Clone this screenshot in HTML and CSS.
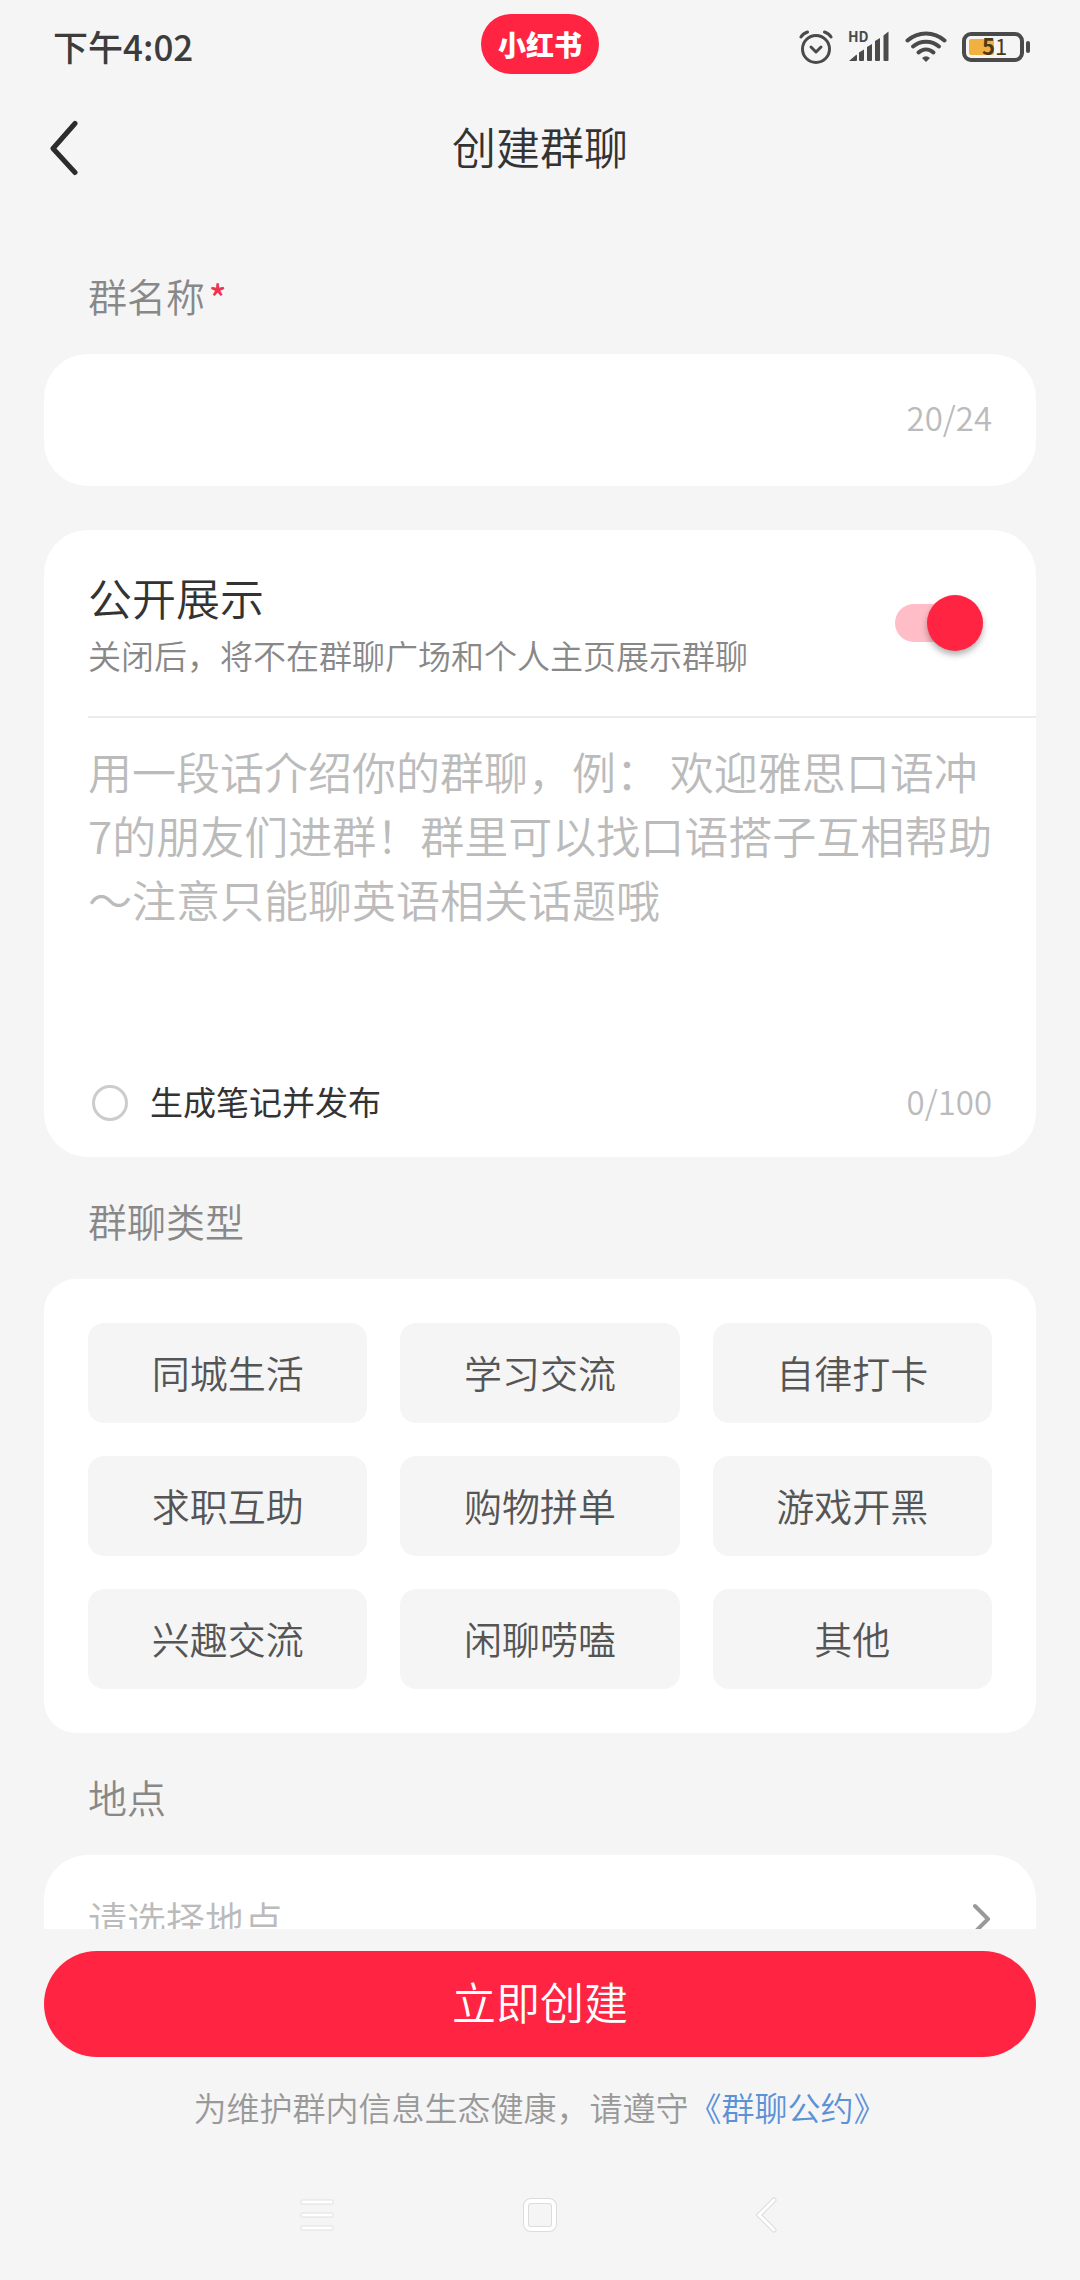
FILE: index.html
```html
<!DOCTYPE html>
<html lang="zh-CN">
<head>
    <meta charset="utf-8">
    <meta name="viewport" content="width=device-width, initial-scale=1">
    <title>创建群聊</title>
    <link rel="stylesheet" href="styles.css">
</head>
<body>
    <div class="status-bar">
        <span class="time">下午4:02</span>
        <span class="logo">小红书</span>
        <div class="status-icons">
            <!-- alarm -->
            <svg width="34" height="34" viewBox="0 0 34 34" fill="none" stroke="#4a4a4a" stroke-width="3" stroke-linecap="round" stroke-linejoin="round">
                <circle cx="17" cy="19" r="13.5"/>
                <path d="M12 17l5 5 5-5"/>
                <path d="M2 7Q4 3.500 8.500 2M25.500 2Q30 3.500 32 7" stroke-width="3"/>
            </svg>
            <!-- mobile signal -->
            <svg class="signal" width="42" height="34" viewBox="0 0 42 34" fill="#4a4a4a">
                <text class="hd" x="0" y="12">HD</text>
                <path d="M1 31l7-6q1-.5 1 .500V30q0 1-1 1z"/>
                <path d="M11 22.500l5-3V30q0 1-1 1h-3q-1 0-1-1z"/>
                <path d="M19 17l5-3V30q0 1-1 1h-3q-1 0-1-1z"/>
                <path d="M27 11l5-3V30q0 1-1 1h-3q-1 0-1-1z"/>
                <path d="M35.500 5.500l5-4V30q0 1-1 1h-3q-1 0-1-1z"/>
            </svg>
            <!-- wifi -->
            <svg width="42" height="34" viewBox="0 0 42 34" fill="none" stroke="#4a4a4a" stroke-width="4" stroke-linecap="round">
                <path d="M2.500 10.500C13 1 29 1 39.500 10.500"/>
                <path d="M8 16.500C15.500 10 26.500 10 34 16.500"/>
                <path d="M13.500 22.500C18 18.500 24 18.500 28.500 22.500"/>
                <path d="M17 28q4-3.500 8 0l-4 4z" fill="#4a4a4a" stroke="none"/>
            </svg>
            <!-- battery -->
            <svg width="68" height="34" viewBox="0 0 68 34">
                <rect x="2" y="4" width="58" height="26" rx="7" fill="none" stroke="#4a4a4a" stroke-width="4"/>
                <rect x="7" y="9" width="25" height="16" rx="2" fill="#f0b140"/>
                <path d="M66 13v8" stroke="#4a4a4a" stroke-width="4" stroke-linecap="round"/>
                <text class="battery-level" x="20" y="25"><tspan class="battery-bold">5</tspan>1</text>
            </svg>
        </div>
    </div>

    <header class="header">
        <button type="button" class="back" aria-label="返回">
            <svg width="30" height="56" viewBox="0 0 30 56" fill="none" stroke="#2c2c2c" stroke-width="5" stroke-linecap="round" stroke-linejoin="round">
                <path d="M27 3.500L5 28.500 27 52.500"/>
            </svg>
        </button>
        <h1>创建群聊</h1>
    </header>

    <main class="content">
        <label class="section-label" for="group-name">群名称<span class="required">*</span></label>
        <div class="card row-card">
            <input type="text" id="group-name" class="name-input" maxlength="24">
            <span class="counter">20/24</span>
        </div>

        <div class="card intro-card">
            <div class="switch-row">
                <label for="public">
                    <span class="switch-title">公开展示</span>
                    <span class="switch-desc">关闭后，将不在群聊广场和个人主页展示群聊</span>
                </label>
                <input type="checkbox" id="public" class="switch" checked>
            </div>
            <textarea class="intro" rows="5" aria-label="群聊介绍" placeholder="用一段话介绍你的群聊，例： 欢迎雅思口语冲7的朋友们进群！群里可以找口语搭子互相帮助～注意只能聊英语相关话题哦"></textarea>
            <div class="publish-row">
                <input type="checkbox" id="publish" class="round-check">
                <label for="publish">生成笔记并发布</label>
                <span class="counter">0/100</span>
            </div>
        </div>

        <h2 class="section-label">群聊类型</h2>
        <div class="card types">
            <button type="button">同城生活</button>
            <button type="button">学习交流</button>
            <button type="button">自律打卡</button>
            <button type="button">求职互助</button>
            <button type="button">购物拼单</button>
            <button type="button">游戏开黑</button>
            <button type="button">兴趣交流</button>
            <button type="button">闲聊唠嗑</button>
            <button type="button">其他</button>
        </div>

        <h2 class="section-label">地点</h2>
        <button type="button" class="card row-card location">
            <span>请选择地点</span>
            <svg width="20" height="32" viewBox="0 0 20 32" fill="none" stroke="#999" stroke-width="4" stroke-linecap="round" stroke-linejoin="round">
                <path d="M3 4l13 13L3 30"/>
            </svg>
        </button>
    </main>

    <footer class="footer">
        <button type="submit" class="create">立即创建</button>
        <p class="agreement">为维护群内信息生态健康，请遵守<a href="#">《群聊公约》</a></p>
    </footer>

    <nav class="system-nav">
        <button type="button" aria-label="菜单">
            <svg width="36" height="36" viewBox="0 0 36 36">
                <g fill="#fff" stroke="#e0e0e0">
                    <rect x="3" y="3" width="32" height="4" rx="1"/>
                    <rect x="3" y="16" width="32" height="4" rx="1"/>
                    <rect x="3" y="29" width="32" height="4" rx="1"/>
                </g>
            </svg>
        </button>
        <button type="button" aria-label="主页">
            <svg width="36" height="36" viewBox="0 0 36 36" fill="none">
                <rect x="4" y="4" width="28" height="28" rx="5" stroke="#dcdcdc" stroke-width="6"/>
                <rect x="4" y="4" width="28" height="28" rx="5" stroke="#fff" stroke-width="4"/>
            </svg>
        </button>
        <button type="button" aria-label="返回上一页">
            <svg width="36" height="36" viewBox="0 0 36 36" fill="none" stroke-linecap="round">
                <path d="M28 3L13 18l15 15" stroke="#dcdcdc" stroke-width="5"/>
                <path d="M28 3L13 18l15 15" stroke="#fff" stroke-width="3"/>
            </svg>
        </button>
    </nav>
</body>
</html>
```
FILE: styles.css
```css
* {
    box-sizing: border-box;
}

body {
    margin: 0;
    height: 100vh;
    display: flex;
    flex-direction: column;
    overflow: hidden;
    background-color: #f5f5f5;
    color: #333;
    font-family: "Noto Sans CJK SC", sans-serif;
    font-size: 33px;
    font-weight: 350;
    line-height: 44px;
}

button, input, textarea {
    margin: 0;
    padding: 0;
    border: none;
    background: none;
    color: inherit;
    font: inherit;
}

svg {
    display: block;
}

/* status bar */
.status-bar {
    display: grid;
    grid-template-columns: 1fr auto 1fr;
    align-items: center;
    padding: 14px 50px;
}
.time {
    padding: 4px 0 0 3px;
    color: #3c3c3c;
    font-size: 35px;
    font-weight: 500;
}
.logo {
    padding: 8px 17px;
    border-radius: 30px;
    background-color: #ff2442;
    color: #fff;
    font-size: 28px;
    font-weight: 900;
}
.status-icons {
    display: flex;
    justify-content: flex-end;
    gap: 15px;
    padding-top: 5px;
}
.signal {
    overflow: visible;
}
.hd {
    font-size: 14px;
    font-weight: 700;
}
.battery-level {
    fill: #4a3a1c;
    font-size: 22px;
    font-weight: 400;
}
.battery-bold {
    font-weight: 700;
}

/* page header */
.header {
    display: grid;
    grid-template-columns: 1fr auto 1fr;
    align-items: center;
    padding: 30px 48px;
}
.back {
    justify-self: start;
}
.header h1 {
    margin: 0;
    padding-bottom: 4px;
    font-size: 44px;
    font-weight: 350;
    line-height: 56px;
}

/* form */
.content {
    flex: 1;
    min-height: 0;
    overflow: hidden;
    padding: 24px 44px 0;
}
.section-label {
    display: block;
    margin: 35px 44px 31px;
    color: #888;
    font-size: 39px;
    font-weight: 350;
    line-height: 56px;
}
.required {
    margin-left: 4px;
    color: #ee3352;
    font-size: 36px;
    font-weight: 500;
    line-height: 1;
}
.card {
    border-radius: 44px;
    background-color: #fff;
}
.row-card {
    display: flex;
    align-items: center;
    width: 100%;
    padding: 35px 44px 41px;
    line-height: 56px;
}
.name-input {
    flex: 1;
    min-width: 0;
    font-size: 39px;
}
.counter {
    margin-left: auto;
    color: #bbb;
}

.intro-card {
    margin-top: 44px;
    padding: 0 0 30px 44px;
}
.switch-row {
    display: flex;
    align-items: center;
    justify-content: space-between;
    padding: 41px 53px 41px 0;
    border-bottom: 2px solid #ebebeb;
}
.switch-title,
.switch-desc {
    display: block;
}
.switch-title {
    margin-bottom: 12px;
    font-size: 44px;
    line-height: 52px;
}
.switch-desc {
    color: #888;
    line-height: 40px;
}
.switch {
    appearance: none;
    display: flex;
    align-items: center;
    justify-content: flex-end;
    width: 88px;
    height: 38px;
    border-radius: 19px;
    background-color: #ffbdc7;
}
.switch::before {
    content: "";
    width: 56px;
    height: 56px;
    border-radius: 50%;
    background-color: #ff2442;
    box-shadow: 0 4px 6px rgba(0, 0, 0, 0.3);
}
.intro {
    display: block;
    width: 100%;
    margin: 21px 0 20px;
    padding-right: 36px;
    overflow: hidden;
    resize: none;
    font-size: 44px;
    line-height: 64px;
}
.intro::placeholder {
    color: #bbb;
}
.publish-row {
    display: flex;
    align-items: center;
    padding-right: 44px;
}
.publish-row label,
.publish-row .counter {
    padding-bottom: 4px;
}
.publish-row label {
    font-weight: 400;
}
.round-check {
    appearance: none;
    width: 36px;
    height: 36px;
    margin: 0 22px 0 4px;
    border: 3px solid #ccc;
    border-radius: 50%;
}

.types {
    display: grid;
    grid-template-columns: repeat(3, 1fr);
    gap: 33px;
    padding: 44px;
    border-radius: 32px;
}
.types button {
    padding: 21px 0 23px;
    border-radius: 16px;
    background-color: #f5f5f5;
    color: #555;
    font-size: 38px;
    line-height: 56px;
}

.location {
    justify-content: space-between;
    color: #bbb;
    font-size: 39px;
}

/* bottom */
.footer {
    padding: 22px 44px 0;
    text-align: center;
}
.create {
    width: 100%;
    padding: 22px 0 28px;
    border-radius: 53px;
    background-color: #ff2442;
    color: #fff;
    font-size: 44px;
    line-height: 56px;
}
.agreement {
    margin: 28px 0 0;
    color: #999;
}
.agreement a {
    color: #5b92d6;
    text-decoration: none;
}
.system-nav {
    display: flex;
    justify-content: center;
    gap: 188px;
    padding: 68px 0 47px;
}
```
